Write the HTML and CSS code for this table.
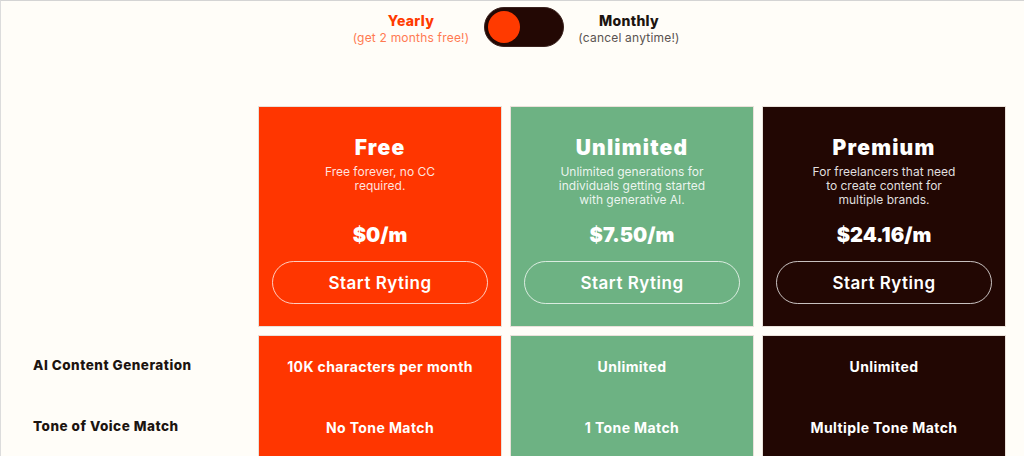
FILE: index.html
```html
<!DOCTYPE html>
<html lang="en">
<head>
<meta charset="utf-8">
<title>Pricing</title>
<link rel="stylesheet" href="styles.css">
</head>
<body>
<div class="page">
  <header class="billing">
    <div class="billing-opt yearly">
      <div class="opt-name">Yearly</div>
      <div class="opt-note">(get 2 months free!)</div>
    </div>
    <div class="switch"><span class="knob"></span></div>
    <div class="billing-opt monthly">
      <div class="opt-name">Monthly</div>
      <div class="opt-note">(cancel anytime!)</div>
    </div>
  </header>

  <section class="table">
    <div class="spacer"></div>
    <div class="plan plan-free">
      <h2 class="plan-name">Free</h2>
      <p class="plan-desc">Free forever, no CC<br>required.</p>
      <div class="plan-price">$0/m</div>
      <button class="plan-btn">Start Ryting</button>
    </div>
    <div class="plan plan-unlimited">
      <h2 class="plan-name">Unlimited</h2>
      <p class="plan-desc">Unlimited generations for<br>individuals getting started<br>with generative AI.</p>
      <div class="plan-price">$7.50/m</div>
      <button class="plan-btn">Start Ryting</button>
    </div>
    <div class="plan plan-premium">
      <h2 class="plan-name">Premium</h2>
      <p class="plan-desc">For freelancers that need<br>to create content for<br>multiple brands.</p>
      <div class="plan-price">$24.16/m</div>
      <button class="plan-btn">Start Ryting</button>
    </div>

    <div class="labels">
      <div class="feat-row label">AI Content Generation</div>
      <div class="feat-row label">Tone of Voice Match</div>
    </div>
    <div class="feats plan-free">
      <div class="feat-row">10K characters per month</div>
      <div class="feat-row">No Tone Match</div>
    </div>
    <div class="feats plan-unlimited">
      <div class="feat-row">Unlimited</div>
      <div class="feat-row">1 Tone Match</div>
    </div>
    <div class="feats plan-premium">
      <div class="feat-row">Unlimited</div>
      <div class="feat-row">Multiple Tone Match</div>
    </div>
  </section>
</div>
</body>
</html>
```

FILE: styles.css
```css
* { box-sizing: border-box; }
html, body { margin: 0; padding: 0; }
body {
  background: #fffdf8;
  font-family: "Inter", "Liberation Sans", sans-serif;
  color: #1c1410;
  height: 456px;
  overflow: hidden;
}
.page {
  border-top: 1px solid #d4d4d4;
  border-left: 1px solid #dcdcdc;
  min-height: 456px;
}
.billing {
  display: flex;
  justify-content: center;
  align-items: flex-start;
  gap: 14px;
  padding: 6px 0 0 7px;
  height: 105px;
}
.billing-opt {
  text-align: center;
  padding-top: 5px;
}
.yearly { width: 118px; }
.monthly { width: 102px; }
.opt-name {
  font-weight: 800;
  font-size: 14px;
  line-height: 18px;
  letter-spacing: 0.3px;
}
.opt-note {
  font-size: 12px;
  line-height: 15px;
  letter-spacing: 0.2px;
  color: #5a5350;
}
.yearly .opt-name { color: #ff3a00; }
.yearly .opt-note { color: #ff7a52; }
.switch {
  width: 80px;
  height: 40px;
  border-radius: 20px;
  background: #230804;
  border: 1px solid #3a221e;
  padding: 3px;
  display: flex;
  align-items: center;
}
.knob {
  width: 32px;
  height: 32px;
  border-radius: 50%;
  background: #ff3a00;
}
.table {
  display: grid;
  grid-template-columns: 249px 244px 244px 244px;
  column-gap: 8px;
  row-gap: 8px;
}
.plan {
  height: 221px;
  border: 1px solid #e9e1da;
  padding: 29px 14px 0;
  display: flex;
  flex-direction: column;
  align-items: center;
  color: #fff;
  text-align: center;
}
.plan-free { background: #ff3600; }
.plan-unlimited { background: #6db283; }
.plan-premium { background: #220703; }
.plan-name {
  margin: 0;
  font-size: 21px;
  line-height: 24px;
  font-weight: 900;
  letter-spacing: 1.2px;
}
.plan-desc {
  margin: 5px 0 0;
  font-size: 12px;
  line-height: 14px;
  height: 42px;
  color: rgba(255,255,255,0.88);
}
.plan-price {
  margin-top: 16px;
  font-size: 20px;
  line-height: 24px;
  font-weight: 900;
}
.plan-btn {
  margin-top: 14px;
  width: 216px;
  height: 43px;
  border-radius: 22px;
  border: 1px solid rgba(255,255,255,0.75);
  background: transparent;
  color: #fff;
  font-family: inherit;
  font-size: 17px;
  font-weight: 600;
  letter-spacing: 0.5px;
  cursor: pointer;
}
.labels { padding-left: 32px; }
.feats {
  border: 1px solid #e9e1da;
  border-bottom: none;
  color: #fff;
  height: 130px;
}
.feat-row {
  height: 62px;
  display: flex;
  align-items: center;
  justify-content: center;
  font-size: 14px;
  font-weight: 700;
  letter-spacing: 0.4px;
}
.feats .feat-row:first-child { height: 60px; }
.label {
  justify-content: flex-start;
  font-weight: 800;
  font-size: 13.5px;
  letter-spacing: 0.5px;
  color: #1c1410;
}
.labels .feat-row:first-child { height: 60px; }
```
